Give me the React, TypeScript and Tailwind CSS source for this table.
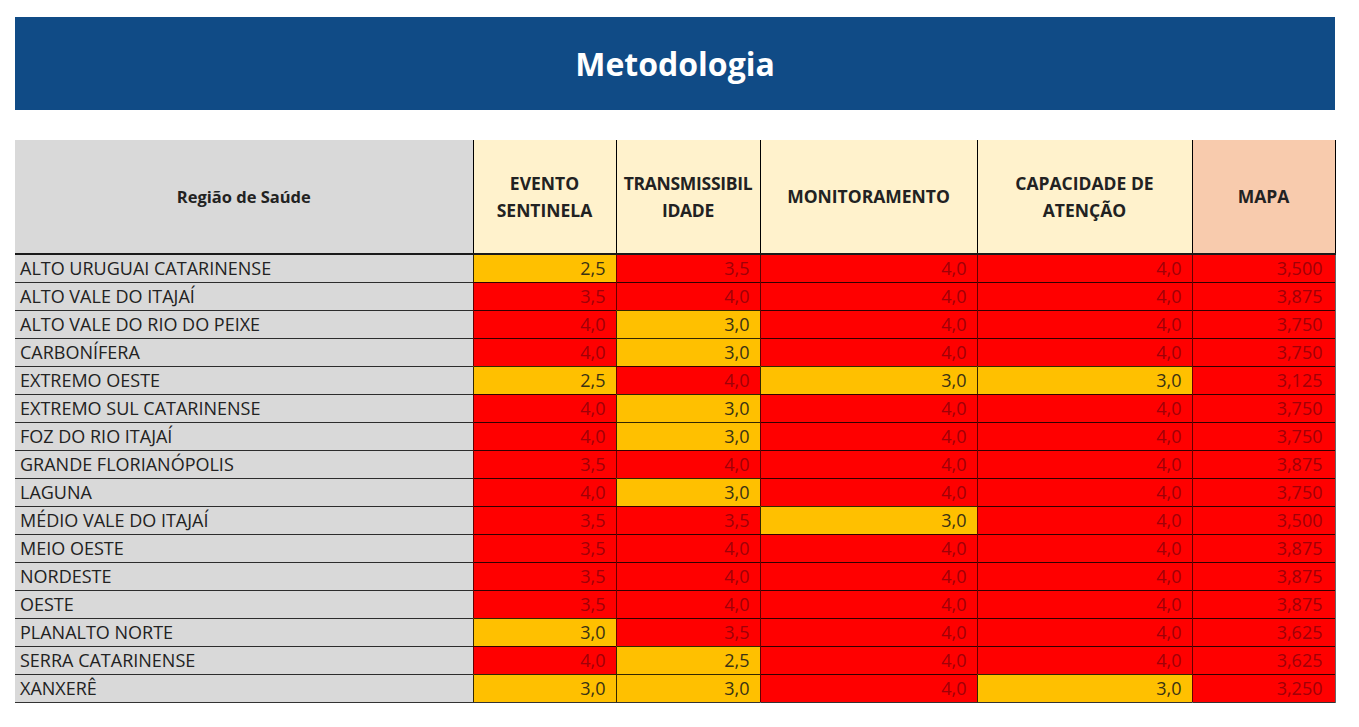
type Row = { name: string; values: number[]; mapa: string };

const rows: Row[] = [
  { name: 'ALTO URUGUAI CATARINENSE', values: [2.5, 3.5, 4.0, 4.0], mapa: '3,500' },
  { name: 'ALTO VALE DO ITAJAÍ', values: [3.5, 4.0, 4.0, 4.0], mapa: '3,875' },
  { name: 'ALTO VALE DO RIO DO PEIXE', values: [4.0, 3.0, 4.0, 4.0], mapa: '3,750' },
  { name: 'CARBONÍFERA', values: [4.0, 3.0, 4.0, 4.0], mapa: '3,750' },
  { name: 'EXTREMO OESTE', values: [2.5, 4.0, 3.0, 3.0], mapa: '3,125' },
  { name: 'EXTREMO SUL CATARINENSE', values: [4.0, 3.0, 4.0, 4.0], mapa: '3,750' },
  { name: 'FOZ DO RIO ITAJAÍ', values: [4.0, 3.0, 4.0, 4.0], mapa: '3,750' },
  { name: 'GRANDE FLORIANÓPOLIS', values: [3.5, 4.0, 4.0, 4.0], mapa: '3,875' },
  { name: 'LAGUNA', values: [4.0, 3.0, 4.0, 4.0], mapa: '3,750' },
  { name: 'MÉDIO VALE DO ITAJAÍ', values: [3.5, 3.5, 3.0, 4.0], mapa: '3,500' },
  { name: 'MEIO OESTE', values: [3.5, 4.0, 4.0, 4.0], mapa: '3,875' },
  { name: 'NORDESTE', values: [3.5, 4.0, 4.0, 4.0], mapa: '3,875' },
  { name: 'OESTE', values: [3.5, 4.0, 4.0, 4.0], mapa: '3,875' },
  { name: 'PLANALTO NORTE', values: [3.0, 3.5, 4.0, 4.0], mapa: '3,625' },
  { name: 'SERRA CATARINENSE', values: [4.0, 2.5, 4.0, 4.0], mapa: '3,625' },
  { name: 'XANXERÊ', values: [3.0, 3.0, 4.0, 3.0], mapa: '3,250' },
];

const fmt = (v: number) => v.toFixed(1).replace('.', ',');

export default function App() {
  return (
    <div className="min-h-[727px] bg-white px-[15px] pt-[17px] font-['Open_Sans',sans-serif] text-[#222]">
      {/* Title bar */}
      <div className="flex h-[93px] w-[1320px] items-center justify-center bg-[#104b86]">
        <h1 className="text-[32px] font-bold text-white">Metodologia</h1>
      </div>

      {/* Table */}
      <table className="mt-[30px] w-[1320px] table-fixed border-collapse">
        <colgroup>
          <col className="w-[458px]" />
          <col className="w-[143px]" />
          <col className="w-[144px]" />
          <col className="w-[217px]" />
          <col className="w-[215px]" />
          <col className="w-[143px]" />
        </colgroup>
        <thead>
          <tr className="h-[114px] border-b-2 border-[#1a1a1a] text-[17.5px] font-bold leading-[27px]">
            <th className="bg-[#d9d9d9] text-[16.5px] font-bold">Região de Saúde</th>
            <th className="border-l border-black bg-[#fff2cc] font-bold">
              EVENTO
              <br />
              SENTINELA
            </th>
            <th className="border-l border-black bg-[#fff2cc] font-bold tracking-[-0.3px]">
              TRANSMISSIBIL
              <br />
              IDADE
            </th>
            <th className="border-l border-black bg-[#fff2cc] font-bold">MONITORAMENTO</th>
            <th className="border-l border-black bg-[#fff2cc] font-bold">
              CAPACIDADE DE
              <br />
              ATENÇÃO
            </th>
            <th className="border-x border-black bg-[#f8cbad] font-bold">MAPA</th>
          </tr>
        </thead>
        <tbody className="text-[18px] leading-none">
          {rows.map((r) => (
            <tr key={r.name} className="h-[28px] border-b-[1.5px] border-black/80">
              <td className="bg-[#d9d9d9] px-[5px] text-left font-medium">{r.name}</td>
              {r.values.map((v, i) => (
                <td
                  key={i}
                  className={
                    v <= 3
                      ? 'border-l border-black/80 bg-[#ffc000] pr-[10px] text-right font-medium text-[#3a3214]'
                      : 'border-l border-black/60 bg-[#ff0000] pr-[10px] text-right font-medium text-[#a00008]'
                  }
                >
                  {fmt(v)}
                </td>
              ))}
              <td className="border-x border-black/60 bg-[#ff0000] pr-[12px] text-right font-medium text-[#a00008]">
                {r.mapa}
              </td>
            </tr>
          ))}
        </tbody>
      </table>
    </div>
  );
}
